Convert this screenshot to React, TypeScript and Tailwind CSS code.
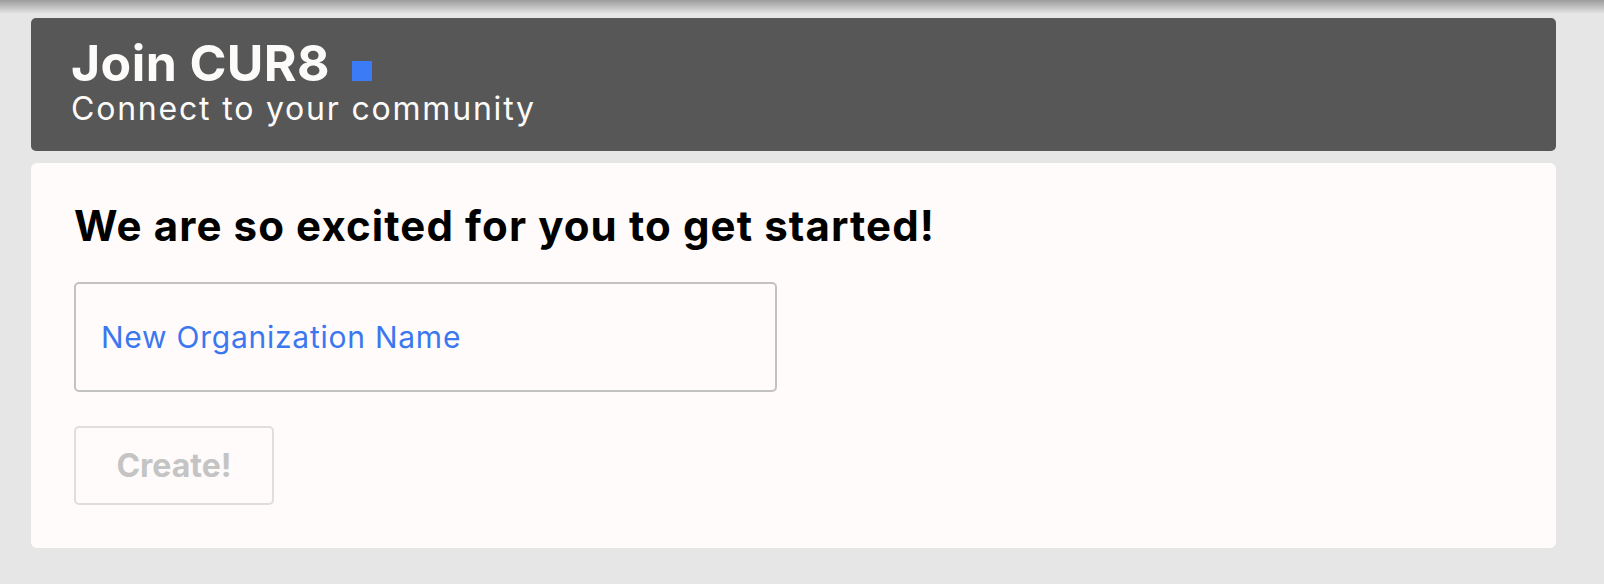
import { useState } from 'react';

export default function App() {
  const [orgName, setOrgName] = useState('');

  return (
    <div className="min-h-[584px] w-full bg-[#e6e6e6] font-['Inter','Noto_Sans',sans-serif]">
      {/* browser chrome shadow */}
      <div className="h-[14px] bg-gradient-to-b from-[#9c9c9c] to-[#e6e6e6]" />

      <div className="ml-[31px] mr-[48px] mt-[4px] flex flex-col gap-[12px]">
        <header className="rounded-[5px] bg-[#575757] pb-[26px] pl-[40px] pt-[20px] text-[#fdfbfa]">
          <div className="flex items-end gap-[22px]">
            <h1 className="text-[50px] font-bold leading-none tracking-[0.4px]">Join CUR8</h1>
            <span className="mb-[7px] h-[20px] w-[20px] bg-[#3b7bf6]" />
          </div>
          <p className="mt-[5px] text-[32px] leading-none tracking-[1.8px]">Connect to your community</p>
        </header>

        <main className="rounded-[6px] bg-[#fffbfa] px-[43px] pb-[43px] pt-[42px]">
          <h2 className="text-[42px] font-bold leading-none tracking-[1.1px] text-black">
            We are so excited for you to get started!
          </h2>

          <input
            type="text"
            value={orgName}
            onChange={(e) => setOrgName(e.target.value)}
            placeholder="New Organization Name"
            className="mt-[35px] block h-[110px] w-[703px] rounded-[5px] border-2 border-[#c2c2c2] bg-transparent px-[25px] text-[30px] tracking-[0.75px] text-[#3b78f0] outline-none placeholder:text-[#3b78f0]"
          />

          <button
            type="button"
            disabled={!orgName.trim()}
            className="mt-[34px] flex h-[79px] w-[200px] items-center justify-center rounded-[5px] border-2 border-[#dedede] text-[32px] font-bold text-[#c4c4c4]"
          >
            Create!
          </button>
        </main>
      </div>
    </div>
  );
}
